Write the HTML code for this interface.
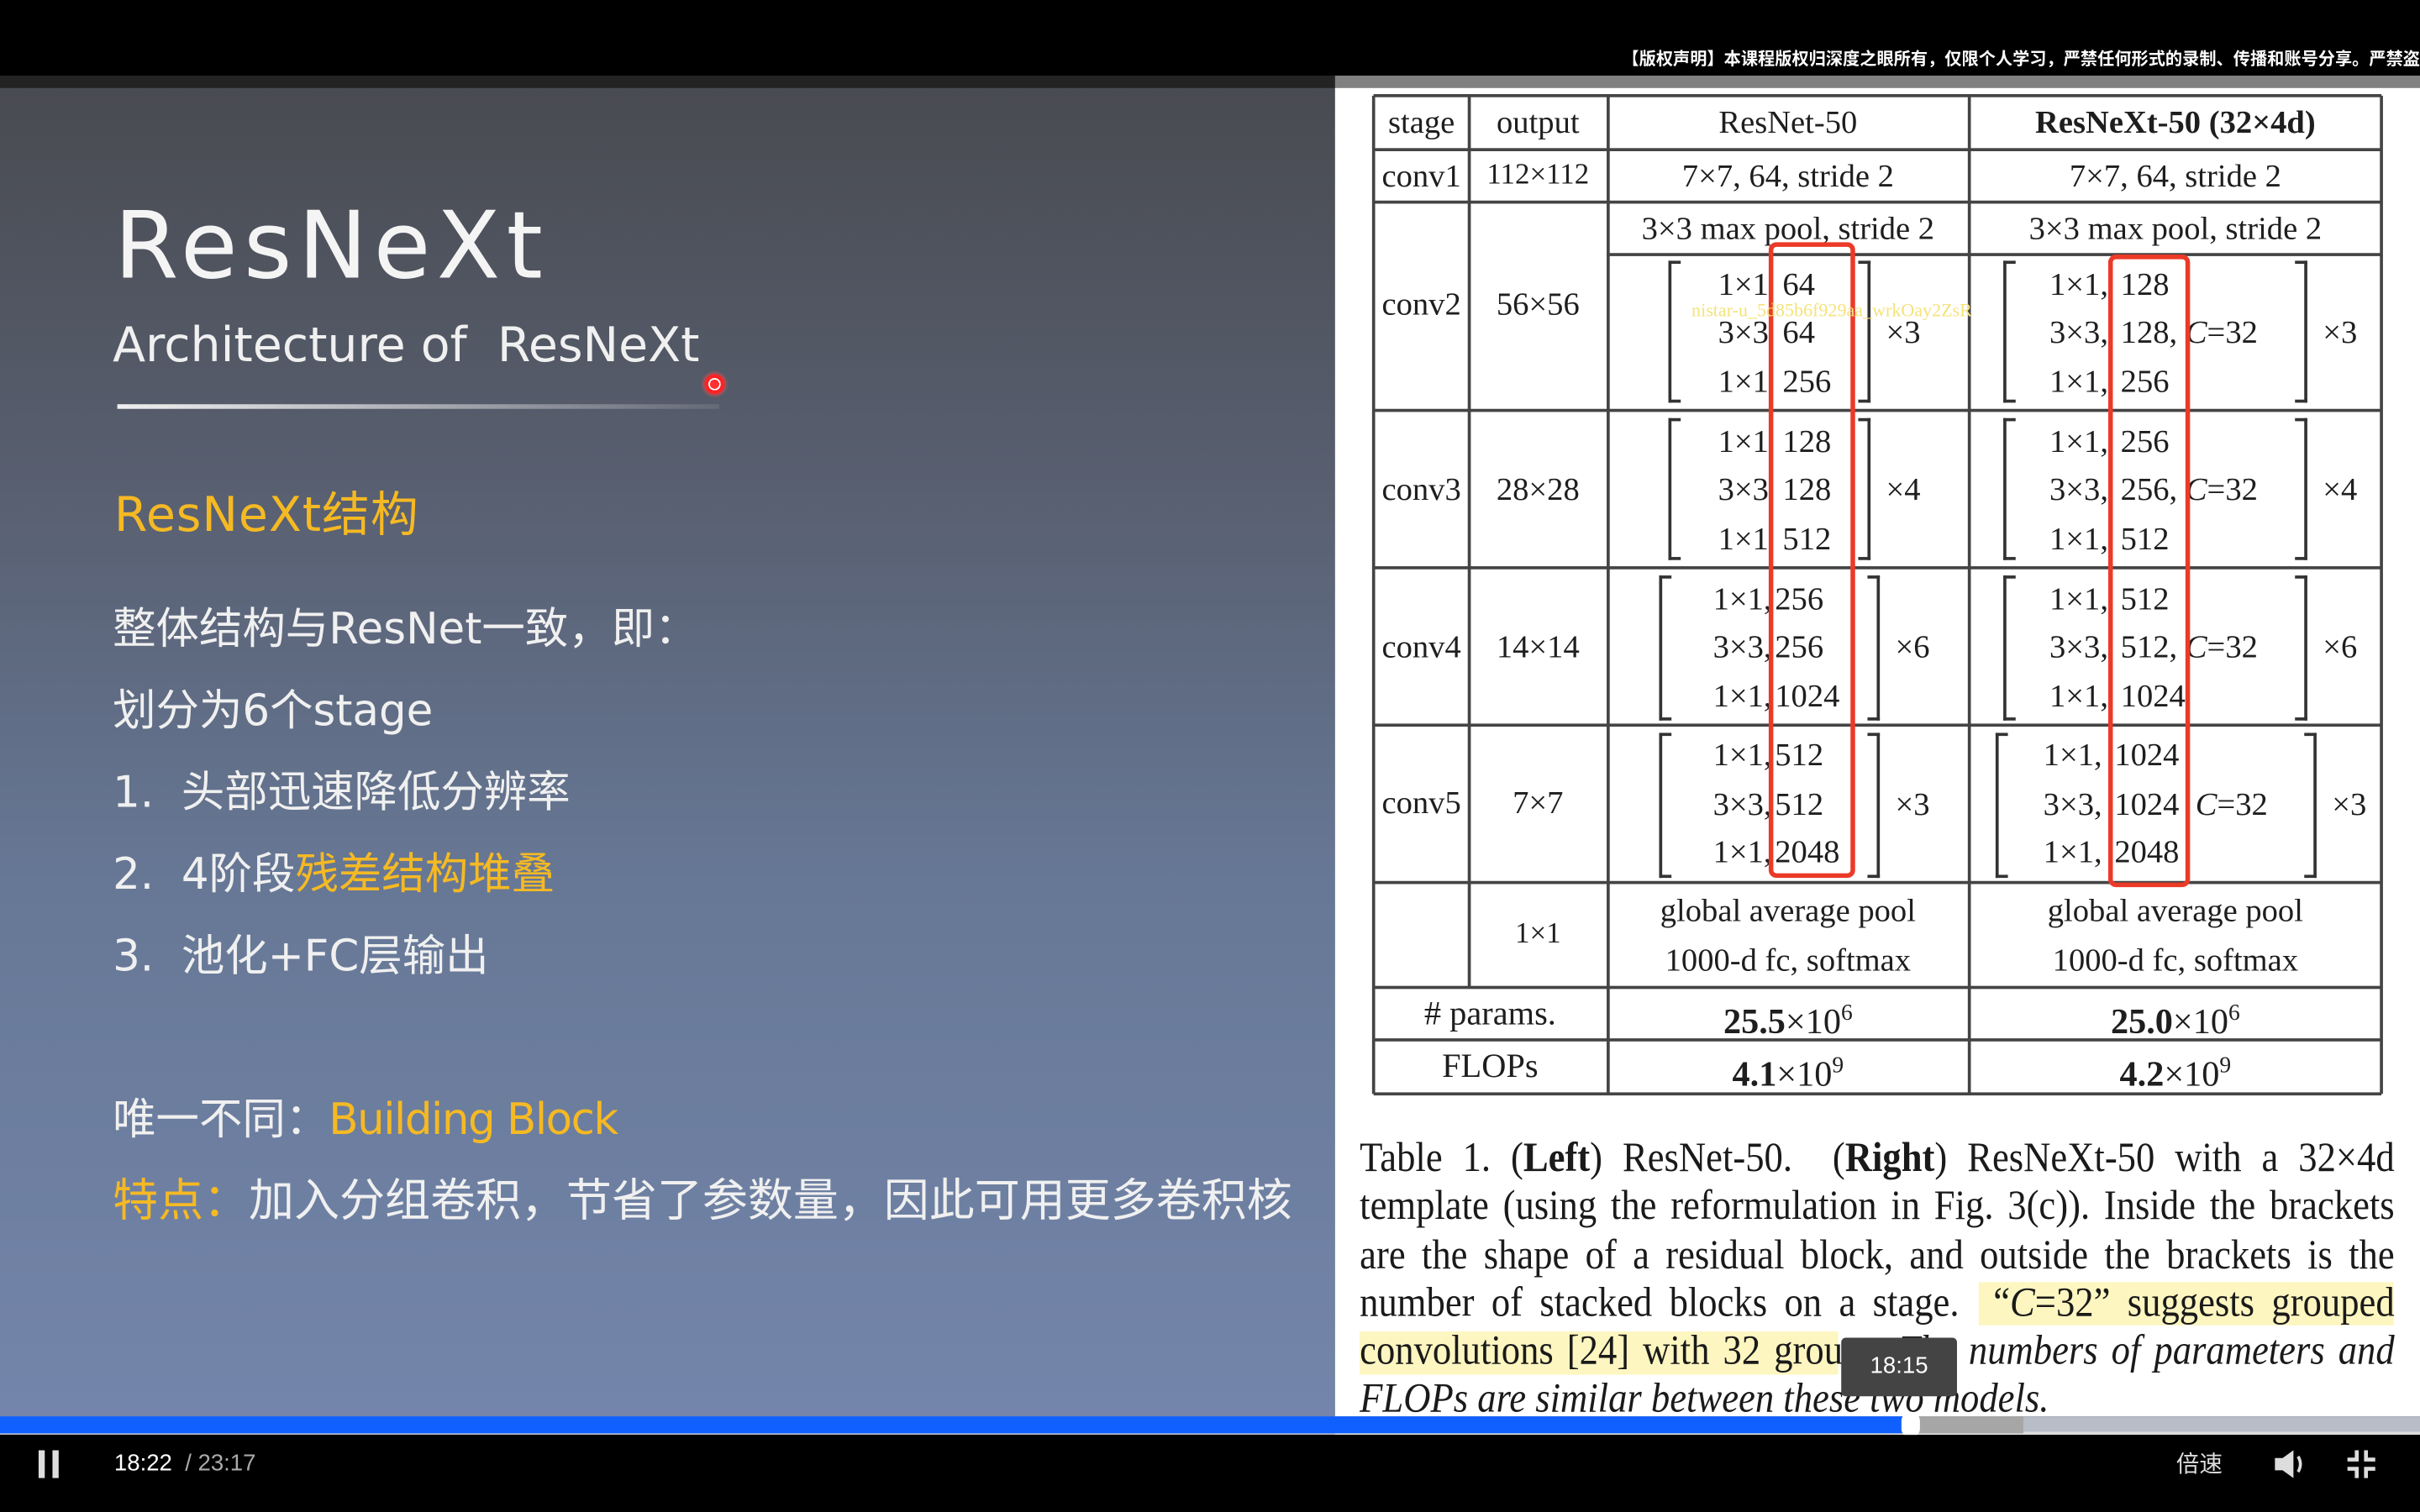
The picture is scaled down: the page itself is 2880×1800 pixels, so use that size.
<!DOCTYPE html>
<html><head><meta charset="utf-8"><style>
html,body{margin:0;padding:0;background:#000;width:2880px;height:1800px;overflow:hidden}
#s{position:absolute;left:0;top:0;width:1568px;height:980px;transform:scale(1.836735);transform-origin:0 0;background:#000;overflow:hidden}
.a{position:absolute;white-space:nowrap}
.cj{font-family:"DejaVu Sans","Noto Sans CJK SC",sans-serif}
.sr{font-family:"Liberation Serif",serif;color:#1e1e1e;font-size:21px;line-height:30px}
.c{text-align:center}
.r{text-align:right}
.hl{position:absolute;height:2px;background:#444}
.vl{position:absolute;width:1.5px;background:#444}
.br{position:absolute;border:2px solid #333;border-right:none;width:6px}
.bR{position:absolute;border:2px solid #333;border-left:none;width:6px}
.rb{position:absolute;border:3px solid #ec3a28;border-radius:5px}
.cap div{white-space:nowrap;text-align:justify;text-align-last:justify;height:31.3px}
</style></head><body><div id="s">
<div class="a cj" style="right:0;top:30px;color:#fff;font-size:11px;font-weight:bold;font-family:'Noto Sans CJK SC',sans-serif">【版权声明】本课程版权归深度之眼所有，仅限个人学习，严禁任何形式的录制、传播和账号分享。严禁盗</div>
<div class="a" style="left:0;top:49px;width:865px;height:8px;background:#232323"></div>
<div class="a" style="left:865px;top:49px;width:703px;height:8px;background:#808080"></div>
<div class="a" style="left:0;top:57px;width:865px;height:861px;background:linear-gradient(180deg,#494b51 0%,#585f70 30%,#677896 60%,#7385aa 100%)"></div>
<div class="a" style="left:865px;top:57px;width:703px;height:861px;background:#fff"></div>

<div class="a cj" style="left:74px;top:122px;font-size:60px;color:#f4f4f4;letter-spacing:4px;line-height:76px">ResNeXt</div>
<div class="a cj" style="left:73px;top:203px;font-size:31px;color:#f0f0f0;line-height:42px">Architecture of&nbsp; ResNeXt</div>
<div class="a" style="left:76px;top:262px;width:390px;height:3px;background:linear-gradient(90deg,#f0f0f0,rgba(240,240,240,0.1))"></div>
<div class="a" style="left:454px;top:240px;width:18px;height:18px;border-radius:50%;background:radial-gradient(circle,#ff3030 0 3px,#fff 3px 4px,#f22 4px 6px,rgba(255,80,80,.4) 7px,transparent 9px)"></div>
<div class="a cj" style="left:74px;top:314px;font-size:31px;color:#f5b923;line-height:40px;letter-spacing:0.5px">ResNeXt结构</div>
<div class="a cj" style="left:73px;top:388px;font-size:28px;color:#f0f0f0;line-height:40px">整体结构与ResNet一致，即：</div>
<div class="a cj" style="left:73px;top:441px;font-size:28px;color:#f0f0f0;line-height:40px">划分为6个stage</div>
<div class="a cj" style="left:73px;top:494px;font-size:28px;color:#f0f0f0;line-height:40px">1.&nbsp; 头部迅速降低分辨率</div>
<div class="a cj" style="left:73px;top:547px;font-size:28px;color:#f0f0f0;line-height:40px">2.&nbsp; 4阶段<span style="color:#f5b923">残差结构堆叠</span></div>
<div class="a cj" style="left:73px;top:600px;font-size:28px;color:#f0f0f0;line-height:40px">3.&nbsp; 池化+FC层输出</div>
<div class="a cj" style="left:73px;top:706px;font-size:28px;color:#f0f0f0;line-height:40px">唯一不同：<span style="color:#f5b923;letter-spacing:-0.8px">Building Block</span></div>
<div class="a cj" style="left:73px;top:758px;font-size:29.4px;color:#f0f0f0;line-height:40px"><span style="color:#f5b923">特点：</span>加入分组卷积，节省了参数量，因此可用更多卷积核</div>

<!-- table lines -->
<div class="hl" style="left:890px;width:653px;top:61px"></div>
<div class="hl" style="left:890px;width:653px;top:96px"></div>
<div class="hl" style="left:890px;width:653px;top:130px"></div>
<div class="hl" style="left:1041px;width:502px;top:164px;height:1.5px"></div>
<div class="hl" style="left:890px;width:653px;top:265px"></div>
<div class="hl" style="left:890px;width:653px;top:367px"></div>
<div class="hl" style="left:890px;width:653px;top:469px"></div>
<div class="hl" style="left:890px;width:653px;top:571px"></div>
<div class="hl" style="left:890px;width:653px;top:639px"></div>
<div class="hl" style="left:890px;width:653px;top:673px"></div>
<div class="hl" style="left:890px;width:653px;top:708px"></div>
<div class="vl" style="left:889px;top:62px;height:647px"></div>
<div class="vl" style="left:951px;top:62px;height:578px"></div>
<div class="vl" style="left:1041px;top:62px;height:647px"></div>
<div class="vl" style="left:1275px;top:62px;height:647px"></div>
<div class="vl" style="left:1542px;top:62px;height:647px"></div>

<div class="a sr c" style="left:890px;width:62px;top:64px">stage</div>
<div class="a sr c" style="left:952px;width:89px;top:64px">output</div>
<div class="a sr c" style="left:1041px;width:235px;top:64px">ResNet-50</div>
<div class="a sr c" style="left:1276px;width:267px;top:64px;font-weight:bold">ResNeXt-50 (32×4d)</div>
<div class="a sr c" style="left:890px;width:62px;top:99px">conv1</div>
<div class="a sr c" style="left:952px;width:89px;top:99px;font-size:19px">112×112</div>
<div class="a sr c" style="left:1041px;width:235px;top:99px">7×7, 64, stride 2</div>
<div class="a sr c" style="left:1276px;width:267px;top:99px">7×7, 64, stride 2</div>
<div class="a sr c" style="left:1041px;width:235px;top:133px">3×3 max pool, stride 2</div>
<div class="a sr c" style="left:1276px;width:267px;top:133px">3×3 max pool, stride 2</div>

<div class="a sr c" style="left:890px;width:62px;top:182px">conv2</div>
<div class="a sr c" style="left:952px;width:89px;top:182px">56×56</div>
<div class="a sr c" style="left:890px;width:62px;top:302px">conv3</div>
<div class="a sr c" style="left:952px;width:89px;top:302px">28×28</div>
<div class="a sr c" style="left:890px;width:62px;top:404px">conv4</div>
<div class="a sr c" style="left:952px;width:89px;top:404px">14×14</div>
<div class="a sr c" style="left:890px;width:62px;top:505px">conv5</div>
<div class="a sr c" style="left:952px;width:89px;top:505px">7×7</div>

<!-- left column blocks -->
<div class="br" style="left:1081px;top:169px;height:88px"></div><div class="bR" style="left:1204px;top:169px;height:88px"></div>
<div class="br" style="left:1081px;top:271px;height:88px"></div><div class="bR" style="left:1204px;top:271px;height:88px"></div>
<div class="br" style="left:1075px;top:373px;height:90px"></div><div class="bR" style="left:1210px;top:373px;height:90px"></div>
<div class="br" style="left:1075px;top:475px;height:90px"></div><div class="bR" style="left:1210px;top:475px;height:90px"></div>

<div class="a sr r" style="left:1090px;width:56px;top:169px">1×1</div><div class="a sr" style="left:1155px;top:169px">64</div>
<div class="a sr r" style="left:1090px;width:56px;top:200px">3×3</div><div class="a sr" style="left:1155px;top:200px">64</div>
<div class="a sr r" style="left:1090px;width:56px;top:232px">1×1</div><div class="a sr" style="left:1155px;top:232px">256</div>
<div class="a sr" style="left:1222px;top:200px">×3</div>
<div class="a sr r" style="left:1090px;width:56px;top:271px">1×1</div><div class="a sr" style="left:1155px;top:271px">128</div>
<div class="a sr r" style="left:1090px;width:56px;top:302px">3×3</div><div class="a sr" style="left:1155px;top:302px">128</div>
<div class="a sr r" style="left:1090px;width:56px;top:334px">1×1</div><div class="a sr" style="left:1155px;top:334px">512</div>
<div class="a sr" style="left:1222px;top:302px">×4</div>
<div class="a sr r" style="left:1080px;width:68px;top:373px">1×1,</div><div class="a sr" style="left:1150px;top:373px">256</div>
<div class="a sr r" style="left:1080px;width:68px;top:404px">3×3,</div><div class="a sr" style="left:1150px;top:404px">256</div>
<div class="a sr r" style="left:1080px;width:68px;top:436px">1×1,</div><div class="a sr" style="left:1150px;top:436px">1024</div>
<div class="a sr" style="left:1228px;top:404px">×6</div>
<div class="a sr r" style="left:1080px;width:68px;top:474px">1×1,</div><div class="a sr" style="left:1150px;top:474px">512</div>
<div class="a sr r" style="left:1080px;width:68px;top:506px">3×3,</div><div class="a sr" style="left:1150px;top:506px">512</div>
<div class="a sr r" style="left:1080px;width:68px;top:537px">1×1,</div><div class="a sr" style="left:1150px;top:537px">2048</div>
<div class="a sr" style="left:1228px;top:506px">×3</div>

<!-- right column blocks -->
<div class="br" style="left:1298px;top:169px;height:88px"></div><div class="bR" style="left:1487px;top:169px;height:88px"></div>
<div class="br" style="left:1298px;top:271px;height:88px"></div><div class="bR" style="left:1487px;top:271px;height:88px"></div>
<div class="br" style="left:1298px;top:373px;height:90px"></div><div class="bR" style="left:1487px;top:373px;height:90px"></div>
<div class="br" style="left:1293px;top:475px;height:90px"></div><div class="bR" style="left:1493px;top:475px;height:90px"></div>

<div class="a sr r" style="left:1300px;width:66px;top:169px">1×1,</div><div class="a sr" style="left:1374px;top:169px">128</div>
<div class="a sr r" style="left:1300px;width:66px;top:200px">3×3,</div><div class="a sr" style="left:1374px;top:200px">128, <i>C</i>=32</div>
<div class="a sr r" style="left:1300px;width:66px;top:232px">1×1,</div><div class="a sr" style="left:1374px;top:232px">256</div>
<div class="a sr" style="left:1505px;top:200px">×3</div>
<div class="a sr r" style="left:1300px;width:66px;top:271px">1×1,</div><div class="a sr" style="left:1374px;top:271px">256</div>
<div class="a sr r" style="left:1300px;width:66px;top:302px">3×3,</div><div class="a sr" style="left:1374px;top:302px">256, <i>C</i>=32</div>
<div class="a sr r" style="left:1300px;width:66px;top:334px">1×1,</div><div class="a sr" style="left:1374px;top:334px">512</div>
<div class="a sr" style="left:1505px;top:302px">×4</div>
<div class="a sr r" style="left:1300px;width:66px;top:373px">1×1,</div><div class="a sr" style="left:1374px;top:373px">512</div>
<div class="a sr r" style="left:1300px;width:66px;top:404px">3×3,</div><div class="a sr" style="left:1374px;top:404px">512, <i>C</i>=32</div>
<div class="a sr r" style="left:1300px;width:66px;top:436px">1×1,</div><div class="a sr" style="left:1374px;top:436px">1024</div>
<div class="a sr" style="left:1505px;top:404px">×6</div>
<div class="a sr r" style="left:1290px;width:72px;top:474px">1×1,</div><div class="a sr" style="left:1370px;top:474px">1024</div>
<div class="a sr r" style="left:1290px;width:72px;top:506px">3×3,</div><div class="a sr" style="left:1370px;top:506px">1024&nbsp; <i>C</i>=32</div>
<div class="a sr r" style="left:1290px;width:72px;top:537px">1×1,</div><div class="a sr" style="left:1370px;top:537px">2048</div>
<div class="a sr" style="left:1511px;top:506px">×3</div>

<div class="rb" style="left:1146px;top:157px;width:50px;height:406px"></div>
<div class="rb" style="left:1366px;top:165px;width:47px;height:404px"></div>

<div class="a" style="left:1096px;top:194px;font-family:'Liberation Serif',serif;font-size:12px;color:#f5e27a">nistar-u_5d85b6f929aa_wrkOay2ZsR</div>

<div class="a sr c" style="left:952px;width:89px;top:591px;font-size:19px">1×1</div>
<div class="a sr c" style="left:1041px;width:235px;top:575px">global average pool</div>
<div class="a sr c" style="left:1041px;width:235px;top:607px">1000-d fc, softmax</div>
<div class="a sr c" style="left:1276px;width:267px;top:575px">global average pool</div>
<div class="a sr c" style="left:1276px;width:267px;top:607px">1000-d fc, softmax</div>
<div class="a sr c" style="left:890px;width:151px;top:642px;font-size:22px"># params.</div>
<div class="a sr c" style="left:1041px;width:235px;top:642px;font-size:23px"><b>25.5</b>×10<sup style="font-size:15px">6</sup></div>
<div class="a sr c" style="left:1276px;width:267px;top:642px;font-size:23px"><b>25.0</b>×10<sup style="font-size:15px">6</sup></div>
<div class="a sr c" style="left:890px;width:151px;top:676px;font-size:22px">FLOPs</div>
<div class="a sr c" style="left:1041px;width:235px;top:676px;font-size:23px"><b>4.1</b>×10<sup style="font-size:15px">9</sup></div>
<div class="a sr c" style="left:1276px;width:267px;top:676px;font-size:23px"><b>4.2</b>×10<sup style="font-size:15px">9</sup></div>

<!-- caption -->
<div class="a" style="left:1282px;top:831px;width:269px;height:28px;background:#fdf6c0"></div>
<div class="a" style="left:881px;top:863px;width:310px;height:28px;background:#fdf6c0"></div>
<div class="a cap" style="left:881px;top:735px;width:745px;transform:scaleX(0.9);transform-origin:0 0;font-family:'Liberation Serif',serif;font-size:27px;line-height:31.3px;color:#1a1a1a">
<div>Table 1. (<b>Left</b>) ResNet-50.&nbsp; (<b>Right</b>) ResNeXt-50 with a 32×4d</div>
<div>template (using the reformulation in Fig. 3(c)). Inside the brackets</div>
<div>are the shape of a residual block, and outside the brackets is the</div>
<div>number of stacked blocks on a stage.&nbsp; “<i>C</i>=32” suggests grouped</div>
<div>convolutions [24] with 32 groups. <i>The numbers of parameters and</i></div>
<div style="text-align-last:left"><i>FLOPs are similar between these two models.</i></div>
</div>

<!-- tooltip -->
<div class="a" style="left:1193px;top:867px;width:75px;height:38px;background:#444;border-radius:3px;color:#fff;font-family:'Liberation Sans',sans-serif;font-size:15px;line-height:38px;text-align:center">18:15</div>

<!-- progress -->
<div class="a" style="left:0;top:918px;width:1568px;height:12px;background:#b8bec8"></div>
<div class="a" style="left:865px;top:928px;width:703px;height:2px;background:#ddd"></div>
<div class="a" style="left:1238px;top:918px;width:73px;height:11px;background:#a6a6a6"></div>
<div class="a" style="left:0;top:918px;width:1238px;height:11px;background:#1060ff"></div>
<div class="a" style="left:1232px;top:915px;width:12px;height:17px;border-radius:6px;background:#fff"></div>
<div class="a" style="left:0;top:930px;width:1568px;height:50px;background:#000"></div>
<div class="a" style="left:25px;top:940px;width:4px;height:18px;background:#ddd"></div>
<div class="a" style="left:34px;top:940px;width:4px;height:18px;background:#ddd"></div>
<div class="a" style="left:74px;top:939px;font-family:'Liberation Sans',sans-serif;font-size:15px;line-height:20px;color:#fff">18:22 <span style="color:#aaa">&nbsp;/&nbsp;23:17</span></div>
<div class="a" style="left:1410px;top:939px;font-family:'Noto Sans CJK SC',sans-serif;font-size:15px;line-height:20px;color:#ddd">倍速</div>
<svg class="a" style="left:1472px;top:938px" width="24" height="22" viewBox="0 0 24 22"><path d="M2 7h5l7-5v18l-7-5H2z" fill="#ddd"/><path d="M17 6q3 5 0 10" stroke="#ddd" stroke-width="2" fill="none"/></svg>
<svg class="a" style="left:1520px;top:939px" width="20" height="20" viewBox="0 0 20 20" fill="none" stroke="#ddd" stroke-width="2.5"><path d="M7 1v6H1M13 1v6h6M7 19v-6H1M13 19v-6h6"/></svg>
</div></body></html>
